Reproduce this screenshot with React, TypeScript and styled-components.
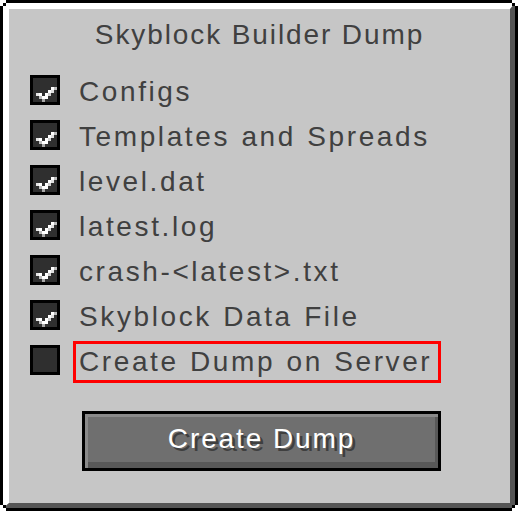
import React from 'react';
import styled, { createGlobalStyle } from 'styled-components';

const GlobalStyle = createGlobalStyle`
    html, body {
        margin: 0;
        padding: 0;
        background: #ffffff;
    }
`;

const Panel = styled.div`
    width: 518px;
    height: 511px;
    box-sizing: border-box;
    padding: 3px;
    background: #000000;
    clip-path: polygon(
        6px 0, 512px 0, 512px 3px, 515px 3px, 515px 6px, 518px 6px,
        518px 505px, 515px 505px, 515px 508px, 512px 508px, 512px 511px,
        6px 511px, 6px 508px, 3px 508px, 3px 505px, 0 505px,
        0 6px, 3px 6px, 3px 3px, 6px 3px
    );
`;

const Inner = styled.div`
    height: 100%;
    box-sizing: border-box;
    background: #c6c6c6;
    border-top: 6px solid #ffffff;
    border-left: 6px solid #ffffff;
    border-bottom: 5px solid #555555;
    border-right: 5px solid #555555;
    clip-path: polygon(
        3px 0, calc(100% - 3px) 0, calc(100% - 3px) 3px, 100% 3px,
        100% calc(100% - 3px), calc(100% - 3px) calc(100% - 3px), calc(100% - 3px) 100%,
        3px 100%, 3px calc(100% - 3px), 0 calc(100% - 3px), 0 3px, 3px 3px
    );
    display: flex;
    flex-direction: column;
    padding-top: 11px;
    font-family: "Liberation Sans", Arial, sans-serif;
    font-size: 28px;
    letter-spacing: 1.9px;
`;

const Title = styled.div`
    height: 30px;
    line-height: 30px;
    text-align: center;
    color: #404040;
    white-space: nowrap;
`;

const Options = styled.div`
    display: flex;
    flex-direction: column;
    gap: 15px;
    margin-top: 25px;
    padding-left: 21px;
`;

const Row = styled.div`
    display: flex;
    align-items: flex-start;
    gap: 19px;
    height: 30px;
`;

const Box = styled.div`
    width: 30px;
    height: 30px;
    box-sizing: border-box;
    border: 3px solid #000000;
    background: #2f2f2f;
    flex-shrink: 0;
    display: flex;
`;

type LabelProps = {
    highlighted: boolean
}

const Label = styled.span<LabelProps>`
    margin-top: 2px;
    height: 30px;
    line-height: 30px;
    color: #404040;
    white-space: nowrap;
    letter-spacing: 2.6px;
    word-spacing: 1px;
    padding-right: ${p => p.highlighted ? '3px' : '0'};
    outline: ${p => p.highlighted ? '3px solid #ff0000' : 'none'};
    outline-offset: 3px;
`;

const ButtonRow = styled.div`
    margin-top: 36px;
    padding-left: 73px;
    display: flex;
`;

const Button = styled.div`
    width: 359px;
    height: 60px;
    box-sizing: border-box;
    border: 3px solid #000000;
    background: #6f6f6f;
    box-shadow: inset 3px 3px 0 #8a8a8a, inset -3px -6px 0 #585858;
    color: #ffffff;
    text-shadow: 3px 3px 0 #3f3f3f;
    text-align: center;
    line-height: 50px;
    white-space: nowrap;
`;

// pixels of the tick, in the 10x10 grid of the box (border at 0 and 9)
const checkPixels: [number, number, string][] = [
    [7, 4, '#ffffff'],
    [8, 4, '#bdbdbd'],
    [6, 5, '#ffffff'],
    [7, 5, '#e0e0e0'],
    [2, 6, '#e6e6e6'],
    [3, 6, '#ffffff'],
    [5, 6, '#ffffff'],
    [6, 6, '#cfcfcf'],
    [3, 7, '#bdbdbd'],
    [4, 7, '#ffffff'],
    [5, 7, '#ffffff'],
    [4, 8, '#a8a8a8'],
];

function CheckMark() {
    return (
        <svg width="24" height="24" viewBox="1 1 8 8" shapeRendering="crispEdges">
            {checkPixels.map(([x, y, c], i) => (
                <rect key={i} x={x} y={y} width="1" height="1" fill={c} />
            ))}
        </svg>
    );
}

type Option = {
    label: string,
    checked: boolean,
    highlighted?: boolean
}

const options: Option[] = [
    { label: 'Configs', checked: true },
    { label: 'Templates and Spreads', checked: true },
    { label: 'level.dat', checked: true },
    { label: 'latest.log', checked: true },
    { label: 'crash-<latest>.txt', checked: true },
    { label: 'Skyblock Data File', checked: true },
    { label: 'Create Dump on Server', checked: false, highlighted: true },
];

function App() {
    return (
        <>
            <GlobalStyle />
            <Panel>
                <Inner>
                    <Title>Skyblock Builder Dump</Title>
                    <Options>
                        {options.map(o => (
                            <Row key={o.label}>
                                <Box>{o.checked && <CheckMark />}</Box>
                                <Label highlighted={!!o.highlighted}>{o.label}</Label>
                            </Row>
                        ))}
                    </Options>
                    <ButtonRow>
                        <Button>Create Dump</Button>
                    </ButtonRow>
                </Inner>
            </Panel>
        </>
    );
}

export default App;
